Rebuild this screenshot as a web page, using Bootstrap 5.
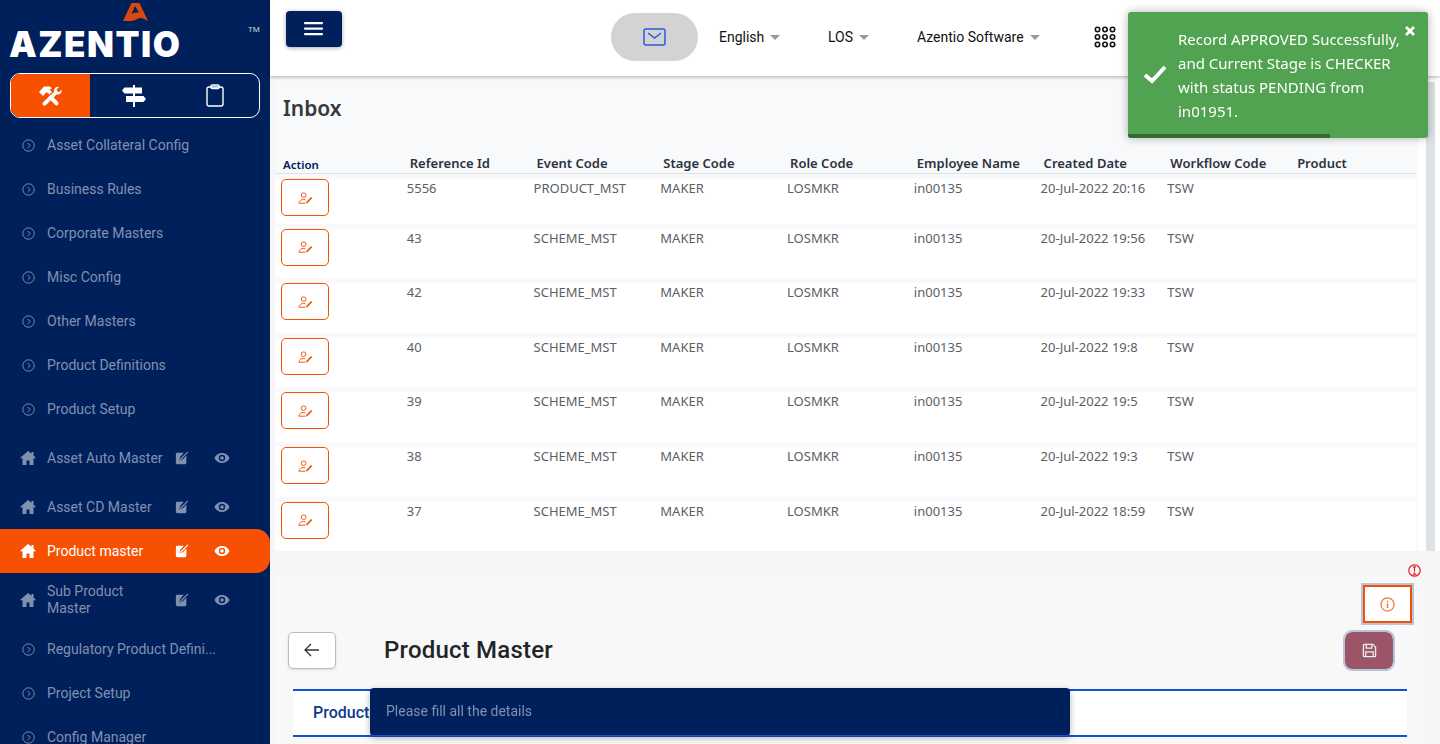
<!DOCTYPE html>
<html>
<head>
    <title>Product Master - Azentio</title>
    <link href="https://cdn.jsdelivr.net/npm/bootstrap@5.3.2/dist/css/bootstrap.min.css" rel="stylesheet">
    <script src="https://cdn.jsdelivr.net/npm/bootstrap@5.3.2/dist/js/bootstrap.bundle.min.js"></script>
    <style>
        html, body { height: 744px; overflow: hidden; }
        body { font-family: Roboto, sans-serif; background: #fff; }
        .side-bar { width: 270px; height: 744px; background: #00205c; flex: none; overflow: hidden; }
        .logo-box { height: 73px; position: relative; }
        .logo-word { font-family: Inter, sans-serif; font-weight: 900; font-size: 35px; line-height: 35px; color: #fff; letter-spacing: 1.5px; position: absolute; left: 9px; top: 27px; }
        .logo-tm { position: absolute; left: 248px; top: 25px; font-size: 8px; color: #c6cede; line-height: 10px; }
        .logo-mark { position: absolute; left: 123px; top: 3px; }
        .mode-tabs { margin: 0 10px 5px; height: 45px; border: 1px solid #fff; border-radius: 10px; overflow: hidden; }
        .mode-tab { width: 79px; color: #fff; }
        .mode-tab.mode-on { background: #f65000; }
        .mode-rest { flex: 1; }
        .side-item { min-height: 44px; padding: 0 0 0 22px; color: #8290b0; font-size: 14px; line-height: 17px; }
        .side-item.side-on { background: #f65000; color: #fff; border-radius: 0 14px 14px 0; }
        .side-label { width: 118px; margin-left: 12px; flex: none; }
        .side-wide { width: 190px; }
        .home-ico { margin-left: -2px; margin-right: -1px; }
        .act-ico { margin-left: 10px; }
        .act-eye { margin-left: 25px; }
        .top-bar { height: 76px; background: #fff; box-shadow: 0 1px 4px rgba(0,0,0,.3); position: relative; z-index: 2; }
        .menu-btn { position: absolute; left: 16px; top: 11px; width: 56px; height: 36px; background: #00205c; border-radius: 4px; box-shadow: 0 1px 4px rgba(0,0,0,.35); border: 0; padding: 0; }
        .mail-pill { position: absolute; left: 341px; top: 13px; width: 87px; height: 48px; background: #d3d3d3; border-radius: 24px / 24px; }
        .top-link { position: absolute; top: 28px; font-size: 14px; line-height: 18px; color: #111; }
        .top-caret { display: inline-block; margin-left: 6px; vertical-align: 2px; border-top: 5px solid #999; border-left: 5px solid transparent; border-right: 5px solid transparent; }
        .grid-ico { position: absolute; left: 824px; top: 26px; }
        .main-area { flex: 1; background: #f6f6f6; min-width: 0; position: relative; }
        .inbox-wrap { height: 475px; margin-left: 5px; padding-right: 20px; background: #fff; overflow: hidden; position: relative; }
        .inbox-card { background: #f8f9fa; height: 475px; width: 1141px; box-shadow: 0 0 3px rgba(0,0,0,.08); }
        .inbox-title { font-family: "Noto Sans", sans-serif; font-weight: 600; font-size: 21px; line-height: 28px; color: #343a40; padding: 18px 0 0 8px; height: 57px; }
        .inbox-table { table-layout: fixed; width: 1141px; border-collapse: separate; border-spacing: 0; margin: 0; font-family: "Noto Sans", sans-serif; }
        .inbox-table > :not(caption) > * > * { background: transparent; box-shadow: none; padding: 0; border: 0; }
        .inbox-table thead th { height: 41px; font-size: 13px; font-weight: 600; color: #2b3240; padding-left: 8px; border-bottom: 1px solid #dee2e6; }
        .inbox-table thead th:first-child { font-size: 11.5px; color: #00205c; }
        .inbox-table tbody td { height: 54.6px; font-size: 13px; color: #5b6066; padding-left: 5px; border-bottom: 5px solid #f8f9fa; background: #fff; }
        .inbox-table tbody td:first-child { padding-left: 6px; }
        .inbox-table tbody tr:first-child td { border-top: 5px solid #f8f9fa; height: 54.6px; }
        .row-btn { width: 48px; height: 37px; border: 1px solid #f65000; border-radius: 5px; background: #fff; padding: 0; }
        .track-bar { position: absolute; left: 1151px; top: 6px; width: 9px; height: 469px; background: #dde2e6; }
        .toast-box { position: fixed; left: 1128px; top: 12px; width: 300px; height: 126px; background: #51a351; border-radius: 3px; color: #fff; font-family: "Noto Sans", sans-serif; font-size: 15px; line-height: 24px; padding: 15px 10px 0 50px; box-shadow: 0 0 10px rgba(0,0,0,.3); z-index: 5; overflow: hidden; }
        .toast-check { position: absolute; left: 15px; top: 52px; }
        .toast-x { position: absolute; left: 277px; top: 14px; }
        .toast-bar { position: absolute; left: 0; bottom: 0; height: 4px; width: 202px; background: #356a35; }
        .detail-panel { margin: 24px 0 0 5px; height: 169px; background: #f8f8f8; padding: 10px 17px 0 13px; width: 1148px; }
        .info-btn { width: 49px; height: 38px; background: #fff; border: 2px solid #f65000; outline: 2px solid #b4c6de; margin-right: -6px; margin-left: auto; }
        .back-btn { width: 48px; height: 37px; background: #fff; border: 1px solid #b6bcc8; border-radius: 5px; padding: 0; box-shadow: 0 1px 3px rgba(0,0,0,.1); }
        .page-name { font-size: 24px; font-weight: 500; color: #212529; margin-left: 48px; line-height: 38px; letter-spacing: .2px; }
        .save-btn { width: 48px; height: 37px; background: #9b5566; border: 0; border-radius: 7px; padding: 0; outline: 2px solid #b4c6de; margin-left: auto; margin-right: 13px; }
        .warn-ico { position: absolute; left: 1138px; top: 564px; }
        .tab-strip { height: 48px; margin: 20px -1px 0 5px; background: #fff; border-top: 2px solid #0f55cf; border-bottom: 2px solid #0f55cf; padding: 11px 0 0 20px; font-size: 16px; font-weight: 500; color: #0d3a8a; line-height: 22px; }
        .snack-box { position: fixed; left: 370px; top: 688px; width: 700px; height: 48px; background: #00205c; border-radius: 4px; color: #8290b0; font-size: 14px; line-height: 46px; padding-left: 16px; box-shadow: 0 2px 6px rgba(0,0,0,.3); z-index: 5; border-bottom: 1px solid #0f55cf; }
    </style>
</head>
<body>
    <svg width="0" height="0" class="position-absolute">
        <symbol id="i-chev" viewBox="0 0 16 16"><circle cx="8" cy="8" r="7" fill="none" stroke="currentColor" stroke-width="1.2"/><path d="M6.8 4.8 10 8l-3.2 3.2" fill="none" stroke="currentColor" stroke-width="1.2"/></symbol>
        <symbol id="i-home" viewBox="0 0 16 16"><path fill="currentColor" d="M8 1 .3 7.8l.9 1L2.5 7.7V15h4v-4.5h3V15h4V7.7l1.3 1.1.9-1L13.5 5.6V2h-2v1.8z"/></symbol>
        <symbol id="i-edit" viewBox="0 0 16 16"><path fill="currentColor" d="M1 3.5C1 2.7 1.7 2 2.5 2H10L6 6.5 5 10.5l4-1.2L13 5v8.5c0 .8-.7 1.5-1.5 1.5h-9C1.7 15 1 14.300 1 13.500z"/><path fill="currentColor" d="M14.300.6l.9.9-8 8.200-1.500.5.500-1.500z"/></symbol>
        <symbol id="i-eye" viewBox="0 0 16 16"><path fill="currentColor" d="M8 3C4.500 3 1.700 5.300.5 8 1.700 10.700 4.500 13 8 13s6.300-2.300 7.500-5C14.300 5.300 11.500 3 8 3zm0 8.200A3.200 3.200 0 1 1 8 4.800a3.200 3.200 0 0 1 0 6.400z"/><circle fill="currentColor" cx="8" cy="8" r="1.800"/></symbol>
        <symbol id="i-user" viewBox="0 0 16 16"><g fill="none" stroke="currentColor" stroke-width="1"><circle cx="6" cy="4.500" r="2.500"/><path d="M1 13c.3-2.500 2.300-4 5-4 .7 0 1.300.1 1.800.3"/><path d="M1 13h7"/></g><path fill="currentColor" d="M14 6.500l1.200 1.200-5 5-1.800.6.600-1.800z"/></symbol>
    </svg>
    <div class="d-flex">
        <aside class="side-bar">
            <div class="logo-box">
                <svg class="logo-mark" width="25" height="19" viewBox="0 0 25 19"><path fill="#d9480f" d="M8.500 0h8L25 18c-3-1.500-4.500-3-7.500-3-3.500 0-5 3-9.500 3H0zM12 3 8.500 11c3-1.500 5-1.800 7.500-1.500z"/></svg>
                <div class="logo-word">AZENTIO</div>
                <div class="logo-tm">TM</div>
            </div>
            <div class="mode-tabs d-flex">
                <div class="mode-tab mode-on d-flex align-items-center justify-content-center">
                    <svg width="25" height="22" viewBox="0 0 25 22" fill="#fff"><path d="M1 7 6 1.500h6l2 2-2.500 1 2.500 2.500-2.500 2.500L8.500 7 5 11z"/><path d="M10 12.500l3-3 7 7.500c.8.900.8 2-.1 2.800-.8.800-2 .8-2.800 0z"/><path d="M23.500 4.500c.6 2-.2 4-2.300 4.800-.9.300-1.700.2-2.400 0L8 20c-1 .9-2.300.8-3-.1-.7-.8-.6-2 .2-2.700L16 7c-.4-2 .6-4.200 2.700-5 .9-.3 1.600-.3 2.300-.1L18.500 4.500l1 2 2 .5z"/></svg>
                </div>
                <div class="mode-rest d-flex align-items-center justify-content-center ps-1">
                    <svg width="24" height="22" viewBox="0 0 24 22" fill="#fff"><path d="M11 0h2v22h-2z"/><path d="M2.500 2.500H20v6H2.500L0 5.500zM4 11h17.500L24 14l-2.500 3H4z"/></svg>
                </div>
                <div class="mode-rest d-flex align-items-center justify-content-center pe-1">
                    <svg width="18" height="23" viewBox="0 0 18 23" fill="none" stroke="#fff" stroke-width="1.400"><rect x="1" y="3" width="16" height="19" rx="2"/><rect x="5" y="1" width="8" height="3.500" rx="1"/></svg>
                </div>
            </div>
            <nav id="sideNav"></nav>
        </aside>
        <main class="main-area">
            <div class="top-bar">
                <button class="menu-btn d-flex align-items-center justify-content-center" type="button">
                    <svg width="20" height="14" viewBox="0 0 20 14" fill="#fff"><rect y="0" width="19" height="2.200" rx="1"/><rect y="5.500" width="19" height="2.200" rx="1"/><rect y="11" width="19" height="2.200" rx="1"/></svg>
                </button>
                <div class="mail-pill d-flex align-items-center justify-content-center">
                    <svg width="23" height="18" viewBox="0 0 23 18" fill="none" stroke="#2a5be0" stroke-width="1.500"><rect x="1" y="1" width="21" height="16" rx="2"/><path d="M5 5l6.500 5L18 5"/></svg>
                </div>
                <span class="top-link" style="left:449px">English<i class="top-caret"></i></span>
                <span class="top-link" style="left:558px">LOS<i class="top-caret"></i></span>
                <span class="top-link" style="left:647px">Azentio Software<i class="top-caret"></i></span>
                <svg class="grid-ico" width="22" height="22" viewBox="0 0 22 22" fill="none" stroke="#111" stroke-width="1.600"><circle cx="3.500" cy="3.500" r="2.200"/><circle cx="11" cy="3.500" r="2.200"/><circle cx="18.500" cy="3.500" r="2.200"/><circle cx="3.500" cy="11" r="2.200"/><circle cx="11" cy="11" r="2.200"/><circle cx="18.500" cy="11" r="2.200"/><circle cx="3.500" cy="18.500" r="2.200"/><circle cx="11" cy="18.500" r="2.200"/><circle cx="18.500" cy="18.500" r="2.200"/></svg>
            </div>
            <div class="inbox-wrap">
                <div class="inbox-card">
                    <div class="inbox-title">Inbox</div>
                    <table class="table inbox-table">
                        <thead><tr id="headRow"></tr></thead>
                        <tbody id="rows"></tbody>
                    </table>
                </div>
                <div class="track-bar"></div>
            </div>
            <section class="detail-panel">
                <div class="d-flex">
                    <button class="info-btn d-flex align-items-center justify-content-center p-0" type="button">
                        <svg width="15" height="15" viewBox="0 0 16 16" fill="none" stroke="#f6712a" stroke-width="1.300"><circle cx="8" cy="8" r="7"/><path d="M8 4v1.500M8 7v5" stroke-width="1.600"/></svg>
                    </button>
                </div>
                <div class="d-flex align-items-center mt-2">
                    <button class="back-btn d-flex align-items-center justify-content-center" type="button">
                        <svg width="16" height="14" viewBox="0 0 16 14" fill="none" stroke="#333" stroke-width="1.300"><path d="M15 7H1.500M7 1 1 7l6 6"/></svg>
                    </button>
                    <div class="page-name">Product Master</div>
                    <button class="save-btn d-flex align-items-center justify-content-center" type="button">
                        <svg width="15" height="15" viewBox="0 0 16 16" fill="none" stroke="#eee" stroke-width="1.400"><path d="M1.500 2.500c0-.6.400-1 1-1h9l3 3v9c0 .6-.4 1-1 1h-11c-.6 0-1-.4-1-1z"/><path d="M4.500 1.500v4h6v-4M4 14.500V9.500h8v5"/></svg>
                    </button>
                </div>
                <div class="tab-strip">Product</div>
            </section>
            <svg class="warn-ico" width="13" height="13" viewBox="0 0 16 16" fill="none" stroke="#e8202a" stroke-width="1.500"><circle cx="8" cy="8" r="7"/><path d="M8 3.500v6M8 10.500v2M6 3.500h4M6 12.500h4" stroke-width="1.400"/></svg>
        </main>
    </div>
    <div class="toast-box">
        <svg class="toast-check" width="24" height="20" viewBox="0 0 24 20" fill="none" stroke="#fff" stroke-width="4"><path d="M2 11l7 6L22 3"/></svg>
        Record APPROVED Successfully, and Current Stage is CHECKER with status PENDING from in01951.
        <svg class="toast-x" width="10" height="10" viewBox="0 0 10 10" fill="none" stroke="#fff" stroke-width="2.600"><path d="M1 1l8 8M9 1 1 9"/></svg>
        <div class="toast-bar"></div>
    </div>
    <div class="snack-box">Please fill all the details</div>

    <script>
        const sideItems = [
            ['Asset Collateral Config'], ['Business Rules'], ['Corporate Masters'], ['Misc Config'],
            ['Other Masters'], ['Product Definitions'], ['Product Setup'],
            ['Asset Auto Master', 1], ['Asset CD Master', 1], ['Product master', 2], ['Sub Product Master', 1],
            ['Regulatory Product Defini...'], ['Project Setup'], ['Config Manager']
        ];
        document.getElementById('sideNav').innerHTML = sideItems.map(([name, kind]) => {
            if (!kind) {
                return `<div class="side-item d-flex align-items-center">
                    <svg width="13" height="13"><use href="#i-chev"/></svg>
                    <span class="side-label side-wide">${name}</span></div>`;
            }
            return `<div class="side-item d-flex align-items-center ${kind === 2 ? 'side-on' : ''}" style="${name.length > 16 ? 'min-height:54px' : ''}">
                <svg class="home-ico" width="16" height="16"><use href="#i-home"/></svg>
                <span class="side-label">${name}</span>
                <svg class="act-ico" width="14" height="14"><use href="#i-edit"/></svg>
                <svg class="act-eye" width="16" height="16"><use href="#i-eye"/></svg></div>`;
        }).join('');

        const heads = ['Action', 'Reference Id', 'Event Code', 'Stage Code', 'Role Code', 'Employee Name', 'Created Date', 'Workflow Code', 'Product'];
        document.getElementById('headRow').innerHTML = heads.map(h => `<th>${h}</th>`).join('');

        const rows = [
            ['5556', 'PRODUCT_MST', '20:16'], ['43', 'SCHEME_MST', '19:56'], ['42', 'SCHEME_MST', '19:33'],
            ['40', 'SCHEME_MST', '19:8'], ['39', 'SCHEME_MST', '19:5'], ['38', 'SCHEME_MST', '19:3'], ['37', 'SCHEME_MST', '18:59']
        ];
        document.getElementById('rows').innerHTML = rows.map(r => `<tr>
            <td><button class="row-btn" type="button"><svg width="15" height="15" style="color:#f65000"><use href="#i-user"/></svg></button></td>
            <td>${r[0]}</td><td>${r[1]}</td><td>MAKER</td><td>LOSMKR</td><td>in00135</td>
            <td>20-Jul-2022 ${r[2]}</td><td>TSW</td><td></td></tr>`).join('');
    </script>
</body>
</html>
